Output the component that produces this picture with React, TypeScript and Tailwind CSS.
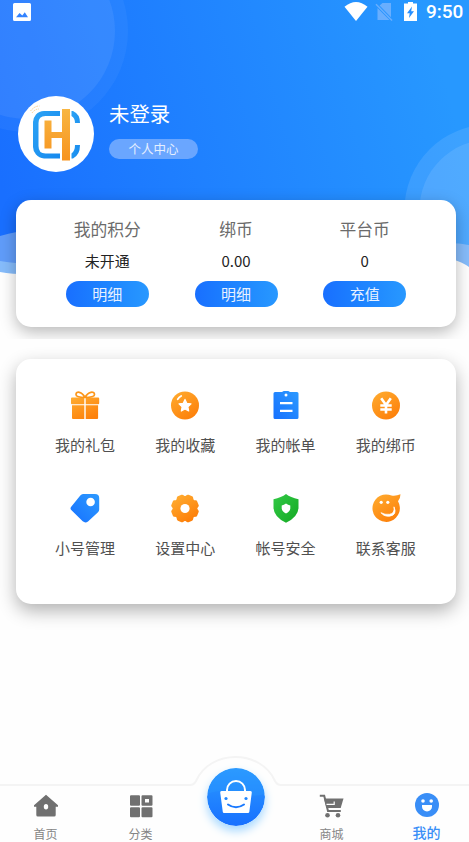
import type { ReactNode } from "react";

function StatusBar() {
  return (
    <div className="flex h-6 items-center pl-[13px] pr-[6px]">
      <svg width="18" height="18" viewBox="0 0 18 18">
        <path fillRule="evenodd" fill="#fff" d="M1.5 0h15A1.5 1.5 0 0 1 18 1.500v15a1.500 1.500 0 0 1-1.500 1.500h-15A1.500 1.500 0 0 1 0 16.500v-15A1.500 1.500 0 0 1 1.500 0ZM3 14.200h12l-3.200-4.900-2.500 3.200-2.700-2.400Z" />
      </svg>
      <div className="ml-auto flex items-center">
        <svg width="24" height="20" viewBox="0 0 24 20">
          <path d="M.5 4.800Q12-4.600 23.500 4.800L12 19Z" fill="#fff" />
        </svg>
        <svg className="ml-[7px]" width="18" height="20" viewBox="0 0 18 20">
          <path d="M7.500 1H16v14.300L4.600 3.500ZM2.500 6 14.500 18H2.500Z" fill="#68aefe" />
          <path d="M1 2.200 17 18.500" stroke="#68aefe" strokeWidth="1.500" />
        </svg>
        <svg className="ml-[11px]" width="13" height="20" viewBox="0 0 13 20">
          <path d="M4 0h5v1.500h4V19H0V1.500h4Z" fill="#fff" />
          <path d="M8 4.500 3 11.200h2.700L5 16l5-6.700H7.200Z" fill="#268fff" />
        </svg>
        <span className="ml-[9px] w-[37px] whitespace-nowrap font-[Roboto,sans-serif] text-[19px] font-medium leading-6">9:50</span>
      </div>
    </div>
  );
}

function HeaderBackdrop() {
  return (
    <svg className="absolute left-0 top-0" width="469" height="282" viewBox="0 0 469 282">
      <defs>
        <linearGradient id="sky" gradientUnits="userSpaceOnUse" x1="0" y1="180" x2="440" y2="60">
          <stop offset="0" stopColor="#196fff" />
          <stop offset="1" stopColor="#2798ff" />
        </linearGradient>
        <clipPath id="wave">
          <path d="M0 0H469V245Q460 243 450 243L40 229Q16 231 0 236Z" />
        </clipPath>
      </defs>
      <path d="M0 236Q16 231 40 229L430 234Q455 240 469 244V267Q462 262 452 259L40 274Q16 275 0 272Z" fill="#86bcfb" />
      <path d="M0 234Q16 230 40 229V264Q16 264 0 261Z" fill="#609cf9" />
      <g clipPath="url(#wave)">
        <rect width="469" height="282" fill="url(#sky)" />
        <circle cx="27" cy="31" r="101" fill="#fff" opacity=".045" />
        <circle cx="27" cy="31" r="88" fill="#fff" opacity=".07" />
        <circle cx="490" cy="210" r="85.600" fill="#fff" opacity=".1" />
        <circle cx="490" cy="210" r="70.500" fill="#fff" opacity=".1" />
      </g>
    </svg>
  );
}

function Avatar() {
  return (
    <svg width="76" height="76" viewBox="0 0 76 76">
      <defs>
        <linearGradient id="ring" x1="0" y1="0" x2="1" y2="1">
          <stop offset="0" stopColor="#2ca3f5" />
          <stop offset="1" stopColor="#1689ee" />
        </linearGradient>
        <linearGradient id="gold" x1="0" y1="0" x2="0" y2="1">
          <stop offset="0" stopColor="#f8b642" />
          <stop offset="1" stopColor="#f7931e" />
        </linearGradient>
      </defs>
      <circle cx="38" cy="38" r="38" fill="#fff" />
      <g fill="url(#ring)">
        <path d="M42 15v5H27.500Q20.500 20 20.500 27V50Q20.500 57.500 27.500 57.500H42V62.500H26Q21 62 18 58.500 15 55 15 51V26Q15 22 18 18.500 21 15.300 26 15Z" />
        <path d="M53.500 15H55Q62 18 62 27H57Q57 22 53.500 20ZM53.500 62.500H55Q62 59 62 49H57Q57 55 53.500 57.500Z" />
      </g>
      <path d="M26.500 24.500h7V36H44V13h8v51.500h-8V42H33.500v10.500h-7Z" fill="url(#gold)" />
      <path d="M12.500 15q4-5 9-5M14 17q3-4 7-4" fill="none" stroke="#fbcf8b" strokeWidth="1" strokeDasharray="1.500 1" />
    </svg>
  );
}

function Balance({ title, value, action }: { title: string; value: string; action: string }) {
  return (
    <div className="flex flex-1 flex-col items-center">
      <span className="h-[26px] text-[16.8px] leading-[26px] text-[#6b6b6b]">{title}</span>
      <span className="mt-[7px] h-6 text-[15px] leading-6 text-[#222]">{value}</span>
      <button className="mt-[8px] h-[26px] w-[83px] rounded-full bg-linear-to-r from-[#196fff] to-[#2898ff] text-[15px] leading-[24px] text-[#e8f1ff]">{action}</button>
    </div>
  );
}

// Eight-toothed outline, with a notch at the top.
const gearPoints = Array.from({ length: 8 }, (_, i) => {
  const point = (offset: number, radius: number) => {
    const angle = ((i * 45 + 22.5 + offset - 90) * Math.PI) / 180;
    return `${(16 + radius * Math.cos(angle)).toFixed(2)},${(15.5 + radius * Math.sin(angle)).toFixed(2)}`;
  };
  return [point(-17, 10.8), point(-9, 12.4), point(9, 12.4), point(17, 10.8)].join(" ");
}).join(" ");

const icons: Record<string, ReactNode> = {
  gift: (
    <g>
      <path d="M3 7.500h12.300v6.700H3Q2 14.200 2 13.200V8.500Q2 7.500 3 7.500ZM16.700 7.500h12.500q1 0 1 1v4.700q0 1-1 1H16.700ZM3 15.200h12.300V29H4q-1 0-1-1ZM16.700 15.200h12.400V28q0 1-1 1H16.700Z" fill="url(#orange)" />
      <path d="M16 7.500C13 1.500 7 .7 7 4.600Q7 7.500 16 7.500C19 1.500 25.500 .7 25.500 4.600Q25.500 7.500 16 7.500Z" fill="#fff" stroke="#fc9619" strokeWidth="1.700" />
    </g>
  ),
  star: (
    <g>
      <circle cx="16" cy="15.500" r="14" fill="url(#orange)" />
      <path d="m16 9.400 1.800 3.900 4.200.6-3.100 2.900.8 4.200-3.700-2-3.700 2 .8-4.200-3.100-2.900 4.200-.6Z" fill="#fff" stroke="#fff" strokeWidth="1.200" strokeLinejoin="round" />
      <path d="M8.700 9.200q1.300-2 3.500-3.200" stroke="#fff" strokeWidth="1.800" strokeLinecap="round" fill="none" />
    </g>
  ),
  bill: (
    <g>
      <path d="M5 2h7l1.700-1h4.600L20 2h7q1.500 0 1.500 1.500v24Q28.500 29 27 29H5q-1.500 0-1.500-1.500v-24Q3.500 2 5 2Z" fill="url(#blue)" />
      <circle cx="16" cy="5" r="1.500" fill="#fff" />
      <path d="M10 13.200h12.500M10 20.800h12.500" stroke="#fff" strokeWidth="2.200" />
    </g>
  ),
  coin: (
    <g>
      <circle cx="16" cy="15.500" r="14" fill="url(#orange)" />
      <path d="m11.200 8.300 4.800 6.700 4.800-6.700M10.300 15.500h11.400M10.300 19.500h11.400M16 15v8.500" stroke="#fff" strokeWidth="2.600" fill="none" />
    </g>
  ),
  tag: (
    <g>
      <path d="M14 1h12q4.200 0 4.200 4v11.500Q30.200 18 29 19.200L19 28.500q-2.700 2-5.300-.2L2 16.700Q1 15.300 2 14L11.300 2.500Q12.500 1 14 1Z" fill="url(#blue)" />
      <circle cx="21.600" cy="9" r="4.300" fill="#fff" />
    </g>
  ),
  gear: (
    <g>
      <polygon points={gearPoints} fill="url(#orange)" stroke="url(#orange)" strokeWidth="3.400" strokeLinejoin="round" />
      <circle cx="16" cy="15.500" r="4.600" fill="#fff" />
    </g>
  ),
  shield: (
    <g>
      <path d="M16 1Q20.500 4.500 28.500 6.300V15Q28 24 16 29.800Q4 24 3.500 15V6.300Q11.500 4.500 16 1Z" fill="url(#green)" />
      <path d="M16 10.500q2.100 1.500 4.300 1.900V15.500q-.3 3-4.300 5-4-2-4.300-5V12.400q2.200-.4 4.300-1.900Z" fill="#fff" />
    </g>
  ),
  service: (
    <g>
      <path d="M16 1.500q3 0 5.500 1Q26 3.200 30.500 1.300 30.500 5 28 8.300A13.700 13.700 0 1 1 16 1.500Z" fill="url(#orange)" />
      <circle cx="11.200" cy="9.300" r="1.600" fill="#fff" />
      <circle cx="17.800" cy="9.300" r="1.600" fill="#fff" />
      <path d="M24 13.800q1 6.700-4.500 7.500-4.700.7-8.500-1.600 3 4 8.500 3.500Q27.500 22 24 13.800Z" fill="#fff" stroke="#fff" strokeWidth=".8" />
    </g>
  ),
};

function Gradients() {
  return (
    <svg className="absolute" width="0" height="0">
      <defs>
        <linearGradient id="orange" x1="0" y1="0" x2=".65" y2="1">
          <stop offset="0" stopColor="#ffad31" />
          <stop offset="1" stopColor="#fd810b" />
        </linearGradient>
        <linearGradient id="blue" x1="1" y1="0" x2="0" y2="1">
          <stop offset="0" stopColor="#2d9aff" />
          <stop offset="1" stopColor="#1671ff" />
        </linearGradient>
        <linearGradient id="green" x1="0" y1="0" x2="1" y2="1">
          <stop offset="0" stopColor="#32c946" />
          <stop offset="1" stopColor="#14a923" />
        </linearGradient>
        <linearGradient id="bag" x1="0" y1="0" x2="0" y2="1">
          <stop offset="0" stopColor="#2c9aff" />
          <stop offset="1" stopColor="#1770ff" />
        </linearGradient>
      </defs>
    </svg>
  );
}

const services = [
  { icon: "gift", label: "我的礼包" },
  { icon: "star", label: "我的收藏" },
  { icon: "bill", label: "我的帐单" },
  { icon: "coin", label: "我的绑币" },
  { icon: "tag", label: "小号管理" },
  { icon: "gear", label: "设置中心" },
  { icon: "shield", label: "帐号安全" },
  { icon: "service", label: "联系客服" },
];

function Tab({ label, active = false, children }: { label: string; active?: boolean; children: ReactNode }) {
  return (
    <div className="flex flex-1 flex-col items-center pt-[8px]">
      <svg width="26" height="26" viewBox="0 0 26 26">{children}</svg>
      <span className={active ? "mt-[3px] text-[14px] font-medium leading-[20px] text-[#398ef7]" : "mt-[5px] text-[12px] leading-[20px] text-[#858585]"}>{label}</span>
    </div>
  );
}

function BottomNav() {
  return (
    <nav className="relative mt-auto h-[57px]">
      <svg className="absolute left-0 top-[-31px]" width="469" height="88" viewBox="0 0 469 88">
        <path d="M-4 31H190Q194 31 196 27C210-5 261-5 275 27Q277 31 281 31H473V92H-4Z" fill="#fefefe" stroke="#f4f4f4" strokeWidth="2" />
      </svg>
      <div className="relative -ml-[2px] flex w-[476px]">
        <Tab label="首页">
          <path d="M13 1.800 25 12.200v1.500h-2.300v8.300q0 1.500-1.500 1.500H4.800q-1.500 0-1.500-1.500v-8.300H1v-1.500Z" fill="#707070" />
          <ellipse cx="13" cy="13.700" rx="2.200" ry="2.700" fill="#fff" />
        </Tab>
        <Tab label="分类">
          <path fill="#707070" fillRule="evenodd" d="M3 2.200h8q1 0 1 1v8.500q0 1-1 1H3q-1 0-1-1V3.200q0-1 1-1ZM14.500 2.200h9q1 0 1 1v8.500q0 1-1 1h-9q-1 0-1-1V3.200q0-1 1-1ZM17 6v3.500H21V6ZM3 14.200h8q1 0 1 1v8q0 1-1 1H3q-1 0-1-1v-8q0-1 1-1ZM14.500 14.200h9q1 0 1 1v8q0 1-1 1h-9q-1 0-1-1v-8q0-1 1-1Z" />
        </Tab>
        <div className="flex-1 pr-[1px]">
          <svg className="mx-auto -mt-[17px] rounded-full shadow-[0_5px_10px_#a5d8ff]" width="58" height="58" viewBox="0 0 58 58">
            <circle cx="29" cy="29" r="29" fill="url(#bag)" />
            <path d="M0 26a29 29 0 0 1 58 0Q43 30 30 25T0 26Z" fill="#2b9aff" opacity=".35" />
            <path d="M20 25v-3a9 9 0 0 1 18 0v3" fill="none" stroke="#fff" strokeWidth="2" />
            <path d="M14.500 23h29q1.500 0 1.300 1.500L42.300 44q-.2 1-1.300 1H17q-1 0-1.200-1L13.200 24.500Q13 23 14.500 23Z" fill="#fff" />
            <circle cx="19" cy="30.500" r="1.600" fill="#2187ff" />
            <circle cx="39" cy="30.500" r="1.600" fill="#2187ff" />
            <path d="M21 36.500Q29 42 37 36.500" stroke="#1a79ff" strokeWidth="2" strokeLinecap="round" fill="none" />
          </svg>
        </div>
        <Tab label="商城">
          <path d="M.8 2.800h4.400l3.800 15.200h12.800" fill="none" stroke="#707070" strokeWidth="2" />
          <path d="M5 5.500h19.500l-2.800 9.500H7.600Z" fill="#707070" />
          <path d="M7.500 11.300h7.700V8.500" stroke="#fff" strokeWidth="1.200" fill="none" />
          <circle cx="8.500" cy="22.200" r="2.300" fill="#707070" />
          <circle cx="19" cy="22.200" r="2.300" fill="#707070" />
        </Tab>
        <Tab label="我的" active>
          <circle cx="13" cy="12" r="12" fill="#398ef7" />
          <circle cx="9" cy="8" r="1.800" fill="#fff" />
          <circle cx="17.200" cy="8" r="1.800" fill="#fff" />
          <path d="M8 12h10v1.500a5 5 0 0 1-10 0Z" fill="#fff" />
        </Tab>
      </div>
    </nav>
  );
}

export default function App() {
  return (
    <div className="relative flex h-[842px] w-[469px] flex-col overflow-hidden bg-[#fefefe] font-['Noto_Sans_CJK_SC',sans-serif]">
      <Gradients />
      <HeaderBackdrop />
      <header className="relative h-[200px] text-white">
        <StatusBar />
        <div className="flex pl-[18px] pt-[72px]">
          <Avatar />
          <div className="ml-[15px] pt-[3px]">
            <h1 className="h-[28px] text-[20.4px] leading-[28px]">未登录</h1>
            <div className="mt-[12px] h-[20px] w-[89px] rounded-full bg-[#6aa6ff] text-center text-[12.500px] leading-[19px] text-[#e5efff]">个人中心</div>
          </div>
        </div>
      </header>
      <div className="relative -mt-5 h-[159px] overflow-hidden px-4 pt-5">
        <section className="flex h-[127px] w-[440px] rounded-[15px] bg-white px-[27px] pt-[16px] shadow-[0_5px_16px_rgba(0,0,0,0.28)]">
          <Balance title="我的积分" value="未开通" action="明细" />
          <Balance title="绑币" value="0.00" action="明细" />
          <Balance title="平台币" value="0" action="充值" />
        </section>
      </div>
      <section className="relative ml-4 mt-5 grid h-[245px] w-[440px] grid-cols-4 grid-rows-[103px_103px] rounded-[15px] bg-white pl-[19px] pr-[20px] pt-[31px] shadow-[0_7px_18px_rgba(0,0,0,0.3)]">
        {services.map(({ icon, label }) => (
          <div key={label} className="flex flex-col items-center">
            <svg width="32" height="31" viewBox="0 0 32 31">{icons[icon]}</svg>
            <span className="mt-[12px] text-[15px] leading-6 text-[#505050]">{label}</span>
          </div>
        ))}
      </section>
      <BottomNav />
    </div>
  );
}
